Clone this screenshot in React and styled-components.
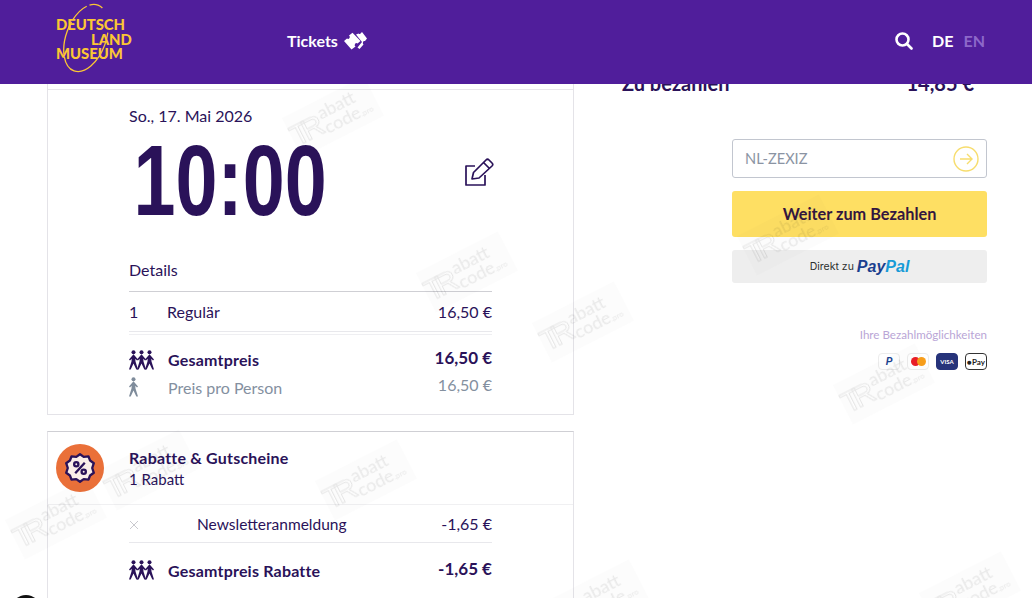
import React from 'react'
import styled, { createGlobalStyle } from 'styled-components'

const ink = '#2a1259'

const GlobalStyle = createGlobalStyle`
  html, body {
    margin: 0;
    height: 598px;
    overflow: hidden;
    background: #fff;
    font-family: "Lato", "Liberation Sans", sans-serif;
    color: ${ink};
  }
  * { box-sizing: border-box; }
`

const Header = styled.header`
  position: fixed;
  top: 0;
  left: 0;
  right: 0;
  height: 84px;
  z-index: 5;
  background: #501e9b;
  display: flex;
  align-items: center;
  padding: 0 47px 0 56px;
`
const Logo = styled.div`
  position: relative;
  width: 78px;
  height: 66px;
  padding-top: 8px;
  font-weight: 900;
  font-size: 14.8px;
  line-height: 14.5px;
  color: #fbc634;
`
const LogoLine = styled.div`
  padding-left: ${p => p.$indent || 0}px;
  white-space: nowrap;
`
const LogoRing = styled.svg`
  position: absolute;
  left: -5px;
  top: -7px;
`
const Nav = styled.nav`
  margin-left: 153px;
  padding-bottom: 3px;
  display: flex;
  align-items: center;
  gap: 6px;
  font-size: 16px;
  font-weight: 700;
  color: #fff;
`
const Tools = styled.div`
  margin-left: auto;
  display: flex;
  align-items: center;
  padding-bottom: 3px;
  color: #fff;
  font-size: 16px;
  font-weight: 700;
`
const Lang = styled.span`
  margin-left: ${p => p.$gap}px;
  color: ${p => (p.$off ? '#8d68c9' : '#fff')};
`

const Main = styled.main`
  display: grid;
  grid-template-columns: 527px 365px;
  column-gap: 48px;
  padding-left: 47px;
  padding-top: 74px;
`
const Left = styled.div`
  display: flex;
  flex-direction: column;
  gap: 16px;
`
const Card = styled.section`
  border: 1px solid #e4e3e8;
  border-top-color: ${p => p.$topLine || '#e4e3e8'};
  background: #fff;
  position: relative;
`
const Ticket = styled.div`
  height: 325px;
  margin-top: 14px;
  border-top: 1px solid #e8e7eb;
  padding: 16px 81px 0 81px;
`
const DateLine = styled.div`
  font-size: 16px;
  line-height: 20px;
`
const TimeRow = styled.div`
  display: flex;
  align-items: center;
  justify-content: space-between;
  height: 100px;
  margin-top: 4px;
`
const Time = styled.div`
  font-family: "Liberation Sans", sans-serif;
  font-weight: 700;
  font-size: 100px;
  line-height: 100px;
  color: ${ink};
  padding-left: 6px;
  transform: scaleX(0.755);
  transform-origin: left center;
`
const EditIcon = styled.svg`
  margin-right: -2px;
  margin-bottom: 16px;
`
const DetailsHead = styled.div`
  margin-top: 30px;
  padding-bottom: 11px;
  font-size: 16px;
  line-height: 20px;
  border-bottom: 1px solid #cfcfd4;
`
const Row = styled.div`
  display: flex;
  align-items: center;
  height: ${p => p.$h || 40}px;
  font-size: ${p => p.$size || 16}px;
  border-bottom: ${p => (p.$line ? '1px solid #e8e8ec' : 'none')};
  color: ${p => (p.$muted ? '#84909f' : ink)};
`
const Cell = styled.span`
  width: ${p => p.$w}px;
  flex-shrink: 0;
  display: flex;
  align-items: center;
`
const Strong = styled.strong`
  font-weight: 700;
  font-size: 16px;
  letter-spacing: 0.2px;
`
const Amount = styled.span`
  margin-left: auto;
  margin-bottom: ${p => p.$lift || 0}px;
  font-weight: ${p => (p.$bold ? 700 : 400)};
  font-size: ${p => (p.$bold ? 17 : 16)}px;
`
const Totals = styled.div`
  margin-top: 2px;
  border-top: 1px solid #efeff2;
  padding-top: 11px;
`
const Discount = styled.div`
  padding: 13px 81px 0 81px;
  height: 72px;
  font-size: 15px;
  position: relative;
`
const DiscountTitle = styled.div`
  font-size: 16px;
  font-weight: 700;
  line-height: 25px;
  letter-spacing: 0.2px;
`
const Badge = styled.div`
  position: absolute;
  left: 8px;
  top: 12px;
  width: 48px;
  height: 48px;
  border-radius: 50%;
  background: #ea7039;
  display: flex;
  align-items: center;
  justify-content: center;
`
const DiscountBody = styled.div`
  border-top: 1px solid #f0f0f2;
  padding: 0 81px 28px;
`
const Close = styled.span`
  width: 68px;
  display: flex;
  padding-top: 2px;
`

const Right = styled.aside`
  display: flex;
  flex-direction: column;
`
const PayRow = styled.div`
  display: flex;
  justify-content: space-between;
  width: 352px;
  height: 20px;
  margin-top: -1px;
  font-size: 20px;
  font-weight: 700;
  line-height: 20px;
`
const Voucher = styled.div`
  margin-top: 46px;
  margin-left: 110px;
  width: 255px;
  height: 39px;
  border: 1px solid #c2c6cf;
  border-radius: 3px;
  display: flex;
  align-items: center;
  justify-content: space-between;
  padding: 0 7px 0 12px;
  color: #8b94a3;
  font-size: 14.6px;
`
const VoucherCode = styled.span`
  padding-bottom: 1px;
`
const Primary = styled.div`
  margin-top: 13px;
  margin-left: 110px;
  width: 255px;
  height: 46px;
  padding-bottom: 2px;
  border-radius: 3px;
  background: #fedf63;
  color: #33163f;
  display: flex;
  align-items: center;
  justify-content: center;
  font-weight: 700;
  font-size: 16.3px;
`
const PayPalBtn = styled.div`
  margin-top: 13px;
  margin-left: 110px;
  width: 255px;
  height: 33px;
  border-radius: 3px;
  background: #eeeeee;
  color: #2c2e2f;
  display: flex;
  align-items: center;
  justify-content: center;
  gap: 3px;
  font-family: "Inter", sans-serif;
  font-size: 10.5px;
`
const PayPalMark = styled.span`
  font-family: "Liberation Sans", sans-serif;
  font-size: ${p => p.$size || 16}px;
  font-weight: 700;
  font-style: italic;
  color: #1a3f8f;
`
const PayPalPal = styled.span`
  color: #179bd7;
`
const PayHint = styled.div`
  margin-top: 45px;
  width: 365px;
  text-align: right;
  font-size: 11.6px;
  color: #b9a5d6;
`
const PayIcons = styled.div`
  margin-top: 12px;
  width: 365px;
  display: flex;
  justify-content: flex-end;
  gap: 7px;
`
const PayIcon = styled.div`
  width: 22px;
  height: 17px;
  border-radius: 4px;
  border: 1px solid ${p => p.$border || '#ececec'};
  background: ${p => p.$bg || '#fff'};
  color: ${p => p.$color || '#222'};
  display: flex;
  align-items: center;
  justify-content: center;
  font-size: ${p => p.$size || 6}px;
  font-weight: 700;
`
const Dot = styled.i`
  width: 9px;
  height: 9px;
  border-radius: 50%;
  background: ${p => p.$c};
  margin-left: ${p => p.$ml || 0}px;
`

const Mark = styled.div`
  position: fixed;
  left: ${p => p.$x}px;
  top: ${p => p.$y}px;
  z-index: 4;
  width: 92px;
  height: 44px;
  display: flex;
  align-items: center;
  transform: rotate(-27deg);
  mix-blend-mode: multiply;
  color: #e9e9e9;
  pointer-events: none;
  background: #fcfcfc;
`
const MarkBig = styled.span`
  font-family: "Liberation Sans", sans-serif;
  font-size: 30px;
  color: #fff;
  -webkit-text-stroke: 1px #e6e6e6;
  letter-spacing: -6px;
  margin-right: 6px;
`
const MarkStack = styled.div`
  font-size: 18px;
  line-height: 16px;
`
const MarkPro = styled.span`
  font-size: 8px;
`
const ChatBubble = styled.div`
  position: fixed;
  left: 12px;
  top: 595px;
  width: 28px;
  height: 28px;
  border-radius: 50%;
  background: #111;
  z-index: 3;
`

const People = ({ color = ink, n = 3 }) => (
  <svg width={n === 3 ? 26 : 10} height="20" viewBox={n === 3 ? '0 0 26 20' : '0 0 10 20'} fill={color}>
    {Array.from({ length: n }).map((_, i) => (
      <g key={i} transform={`translate(${i * 8})`}>
        <circle cx="4.5" cy="2.2" r="2" />
        <path d="M4.5 4.3 L9 9.5 L8 10.5 L6.3 8.7 L6.5 11.5 L9 19.5 L7.3 19.5 L4.5 13.5 L1.7 19.5 L0 19.5 L2.5 11.5 L2.7 8.7 L1 10.5 L0 9.5 Z" />
      </g>
    ))}
  </svg>
)

const Tickets = () => (
  <svg width="23" height="18" viewBox="0 0 23 18" fill="#fff">
    <path d="M0 9 L3 6.5 Q4.5 7.5 5.5 6 Q6.5 4.5 5 3.5 L8.5 .8 L16.5 9 L13.5 11.5 Q12 10.5 11 12 Q10 13.5 11.5 14.5 L7.5 17.5 Z" />
    <path d="M12 2.5 L14.5 1.5 Q15.5 2.5 16.5 1.5 L18 0 L23 6.5 L21 9 Q19.5 8.5 19 10 Q18.5 11.5 19.5 12.5 L15.5 17 L13.5 15.5 L18 10 Z" />
  </svg>
)

const marks = [
  [287, 95], [421, 250], [537, 300], [742, 213], [838, 362],
  [320, 458], [10, 497], [102, 448], [552, 578], [924, 570],
]

export default function App() {
  return (
    <>
      <GlobalStyle />
      <Header>
        <Logo>
          <LogoLine>DEUTSCH</LogoLine>
          <LogoLine $indent={35}>LAND</LogoLine>
          <LogoLine>MUSEUM</LogoLine>
          <LogoRing width="70" height="72" viewBox="0 0 70 72" fill="none">
            <ellipse cx="35" cy="36" rx="20" ry="35" transform="rotate(20 35 36)" stroke="#fbc634" strokeWidth="1.3" strokeDasharray="62 2 34 2 20 3 14 26 30 2" />
          </LogoRing>
        </Logo>
        <Nav>Tickets <Tickets /></Nav>
        <Tools>
          <svg width="18" height="18" viewBox="0 0 18 18" fill="none" stroke="#fff" strokeWidth="2.6" strokeLinecap="round">
            <circle cx="7.5" cy="7.5" r="6" />
            <path d="M12 12 L16.5 16.5" />
          </svg>
          <Lang $gap={19}>DE</Lang>
          <Lang $gap={10} $off>EN</Lang>
        </Tools>
      </Header>

      <Main>
        <Left>
          <Card>
            <Ticket>
              <DateLine>So., 17. Mai 2026</DateLine>
              <TimeRow>
                <Time>10:00</Time>
                <EditIcon width="30" height="30" viewBox="0 0 30 30" fill="none" stroke={ink} strokeWidth="1.7" strokeLinejoin="round">
                  <path d="M11 9 H2 V28 H21 V18" />
                  <path d="M8 22 L9.5 15.5 L22 3 Q23.5 1.5 25 3 L28 6 Q29.5 7.5 28 9 L15 21 Z" />
                  <path d="M19.5 5.5 L25.5 11.5" />
                </EditIcon>
              </TimeRow>
              <DetailsHead>Details</DetailsHead>
              <Row $line><Cell $w={38}>1</Cell>Regulär<Amount>16,50 €</Amount></Row>
              <Totals>
                <Row $h={27}><Cell $w={39}><People /></Cell><Strong>Gesamtpreis</Strong><Amount $bold $lift={5}>16,50 €</Amount></Row>
                <Row $h={28} $muted><Cell $w={39}><People n={1} color="#7f8c9b" /></Cell>Preis pro Person<Amount $lift={5}>16,50 €</Amount></Row>
              </Totals>
            </Ticket>
          </Card>
          <Card $topLine="#cfcfd4">
            <Discount>
              <Badge>
                <svg width="34" height="34" viewBox="0 0 32 32" fill="none" stroke={ink} strokeWidth="2.2" strokeLinejoin="round">
                  <path d="M16 3 L19.5 5.5 L24 5 L25.5 9 L29 11.5 L27.5 16 L29 20.5 L25.5 23 L24 27 L19.5 26.5 L16 29 L12.5 26.5 L8 27 L6.5 23 L3 20.5 L4.5 16 L3 11.5 L6.5 9 L8 5 L12.5 5.5 Z" fill="#faeee8" />
                  <circle cx="12.5" cy="12.5" r="2" />
                  <circle cx="19.5" cy="19.5" r="2" />
                  <path d="M20.5 11 L11.5 21" />
                </svg>
              </Badge>
              <DiscountTitle>Rabatte &amp; Gutscheine</DiscountTitle>
              <div>1 Rabatt</div>
            </Discount>
            <DiscountBody>
              <Row $line $h={38} $size={15.5}>
                <Close>
                  <svg width="10" height="10" viewBox="0 0 10 10" stroke="#c9c9ce" strokeWidth="1">
                    <path d="M1 1 L9 9 M9 1 L1 9" />
                  </svg>
                </Close>
                Newsletteranmeldung<Amount>-1,65 €</Amount>
              </Row>
              <Row $h={54}><Cell $w={39}><People /></Cell><Strong>Gesamtpreis Rabatte</Strong><Amount $bold $lift={3}>-1,65 €</Amount></Row>
            </DiscountBody>
          </Card>
        </Left>

        <Right>
          <PayRow><span>Zu bezahlen</span><span>14,85 €</span></PayRow>
          <Voucher>
            <VoucherCode>NL-ZEXIZ</VoucherCode>
            <svg width="26" height="26" viewBox="0 0 26 26" fill="none" stroke="#f7dd6e" strokeWidth="1.4">
              <circle cx="13" cy="13" r="12" />
              <path d="M7 13 H19 M14 8 L19 13 L14 18" />
            </svg>
          </Voucher>
          <Primary>Weiter zum Bezahlen</Primary>
          <PayPalBtn>Direkt zu <PayPalMark>Pay<PayPalPal>Pal</PayPalPal></PayPalMark></PayPalBtn>
          <PayHint>Ihre Bezahlmöglichkeiten</PayHint>
          <PayIcons>
            <PayIcon><PayPalMark $size={10}>P</PayPalMark></PayIcon>
            <PayIcon><Dot $c="#eb1c26" /><Dot $c="#f99f1b" $ml={-3} /></PayIcon>
            <PayIcon $bg="#26337a" $border="#26337a" $color="#fff">VISA</PayIcon>
            <PayIcon $border="#333" $size={8}>●Pay</PayIcon>
          </PayIcons>
        </Right>
      </Main>

      {marks.map(([x, y]) => (
        <Mark key={`${x}-${y}`} $x={x} $y={y}>
          <MarkBig>TR</MarkBig>
          <MarkStack>abatt<br />code<MarkPro>.pro</MarkPro></MarkStack>
        </Mark>
      ))}
      <ChatBubble />
    </>
  )
}
